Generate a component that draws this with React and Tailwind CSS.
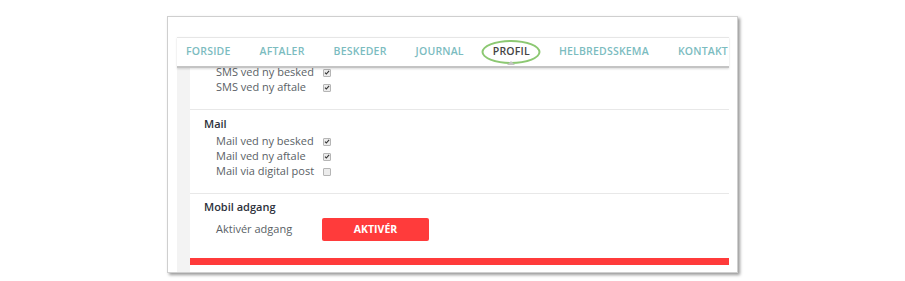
import React from "react";

const tabs = ["FORSIDE", "AFTALER", "BESKEDER", "JOURNAL", "PROFIL", "HELBREDSSKEMA", "KONTAKT"];

const Check = ({ checked }) => (
    <span className="flex h-[8px] w-[8px] items-center justify-center rounded-[1px] border border-[#b5b5b5] bg-[#ececec]">
        {checked && (
            <svg viewBox="0 0 8 8" className="h-[7px] w-[7px]">
                <path d="M1.3 4.2 L3.1 6 L6.8 1.8" fill="none" stroke="#333" strokeWidth="1.5" />
            </svg>
        )}
    </span>
);

const Row = ({ label, checked }) => (
    <div className="flex h-[15px] items-center">
        <span className="w-[107px] text-[#5a5f66]">{label}</span>
        <Check checked={checked} />
    </div>
);

const App = () => {
    return (
        <div
            className="h-[281px] w-[905px] bg-white pl-[167px] pt-[16px]"
            style={{ fontFamily: "'Open Sans', 'Liberation Sans', sans-serif" }}
        >
            <div className="flex h-[257px] w-[571px] flex-col border border-[#cfcfcf] bg-white pl-[9px] pr-[8px] pt-[20px] shadow-[2px_2px_3px_rgba(0,0,0,0.4)]">
                {/* tabs */}
                <div className="relative z-10 flex h-[31px] items-center justify-between border-t border-b-2 border-t-[#e6e6e6] border-b-[#c4c4c4] pl-[9px] pr-[1px] text-[10.5px] font-semibold tracking-[0.2px] text-[#7cbcbf] shadow-[0_1px_2px_rgba(0,0,0,0.15)]">
                    {tabs.map((t) => (
                        <span key={t} className={t === "PROFIL" ? "relative text-[#444]" : ""}>
                            {t}
                            {t === "PROFIL" && (
                                <>
                                    <span className="absolute left-1/2 top-1/2 h-[24px] w-[59px] -translate-x-1/2 -translate-y-1/2 rounded-[50%] border-2 border-[#8cc872]" />
                                    <span className="absolute left-1/2 top-[17px] h-0 w-0 -translate-x-1/2 border-x-[4px] border-b-[4px] border-x-transparent border-b-[#c4c4c4]" />
                                </>
                            )}
                        </span>
                    ))}
                </div>

                {/* content */}
                <div className="flex flex-1 overflow-hidden text-[11px]">
                    <div className="w-[13px] bg-[#f3f3f3]" />
                    <div className="flex flex-1 flex-col">
                        <div className="-mt-[3px] border-b border-[#e8e8e8] pb-[14px] pl-[26px]">
                            <Row label="SMS ved ny besked" checked />
                            <Row label="SMS ved ny aftale" checked />
                        </div>

                        <div className="border-b border-[#e8e8e8] pb-[14px] pt-[6px]">
                            <div className="h-[16px] pl-[14px] leading-[16px] font-semibold text-[#2d313b]">Mail</div>
                            <div className="mt-[2px] pl-[26px]">
                                <Row label="Mail ved ny besked" checked />
                                <Row label="Mail ved ny aftale" checked />
                                <Row label="Mail via digital post" />
                            </div>
                        </div>

                        <div className="pt-[5px]">
                            <div className="h-[16px] pl-[14px] leading-[16px] font-semibold text-[#2d313b]">Mobil adgang</div>
                            <div className="mt-[3px] flex items-center pl-[26px]">
                                <span className="w-[106px] text-[#5a5f66]">Aktivér adgang</span>
                                <button className="flex h-[23px] w-[107px] items-center justify-center rounded-[2px] bg-[#ff3b3b] text-[10.5px] font-bold text-white">
                                    AKTIVÉR
                                </button>
                            </div>
                        </div>

                        <div className="mt-[17px] h-[7px] bg-[#ff3b3b]" />
                    </div>
                </div>
            </div>
        </div>
    );
};

export default App;
